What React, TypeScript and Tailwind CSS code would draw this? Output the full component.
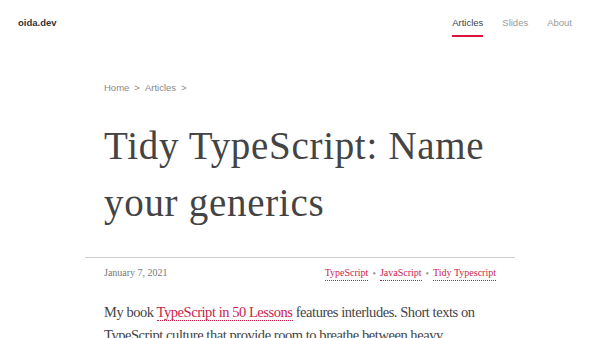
const serif = 'font-["Liberation_Serif","DejaVu_Serif",serif]';
const sans = 'font-["Liberation_Sans",Arial,sans-serif]';

const tags = ['TypeScript', 'JavaScript', 'Tidy Typescript'];

export default function App() {
  return (
    <div className="min-h-screen bg-white text-[#444]">
      <header className={`${sans} flex items-center justify-between pl-[18px] pr-[28px] h-[46px]`}>
        <a className="text-[9.5px] font-bold text-[#333]">oida.dev</a>
        <nav className="flex gap-[19px] text-[9.5px] text-[#999]">
          <a className="relative text-[#444]">
            Articles
            <span className="absolute left-0 right-0 top-[19px] h-[2px] bg-[#dc143c]" />
          </a>
          <a>Slides</a>
          <a>About</a>
        </nav>
      </header>

      <main className="mx-auto w-[430px]">
        <div className="px-[19px]">
          <div className={`${sans} mt-[35px] flex gap-[5px] text-[9.5px] leading-[14px] text-[#888]`}>
            <span>Home</span>
            <span>&gt;</span>
            <span>Articles</span>
            <span>&gt;</span>
          </div>
          <h1 className={`${serif} mt-[22px] text-[39px] leading-[57px] tracking-[0.7px] text-[#444]`}>
            Tidy TypeScript: Name your generics
          </h1>
        </div>

        <div className="mt-[26px] border-t border-[#ccc]" />

        <div className={`${serif} px-[19px] mt-[7px] flex justify-between text-[10px] leading-[15px]`}>
          <span className="text-[#777]">January 7, 2021</span>
          <span className="flex items-center gap-[4px] text-[#c81e4b]">
            {tags.map((t, i) => (
              <span key={t} className="flex items-center gap-[4px]">
                {i > 0 && <span className="text-[#999]">•</span>}
                <a className="border-b border-dotted border-[#c81e4b]">{t}</a>
              </span>
            ))}
          </span>
        </div>

        <p className={`${serif} px-[19px] mt-[20px] text-[14.5px] leading-[23px] tracking-[-0.45px] text-[#444]`}>
          My book{' '}
          <a className="text-[#c81e4b] border-b border-dotted border-[#c81e4b]">TypeScript in 50 Lessons</a>{' '}
          features interludes. Short texts on TypeScript culture that provide room to breathe between heavy,
          technical tutorials.
        </p>
      </main>
    </div>
  );
}
